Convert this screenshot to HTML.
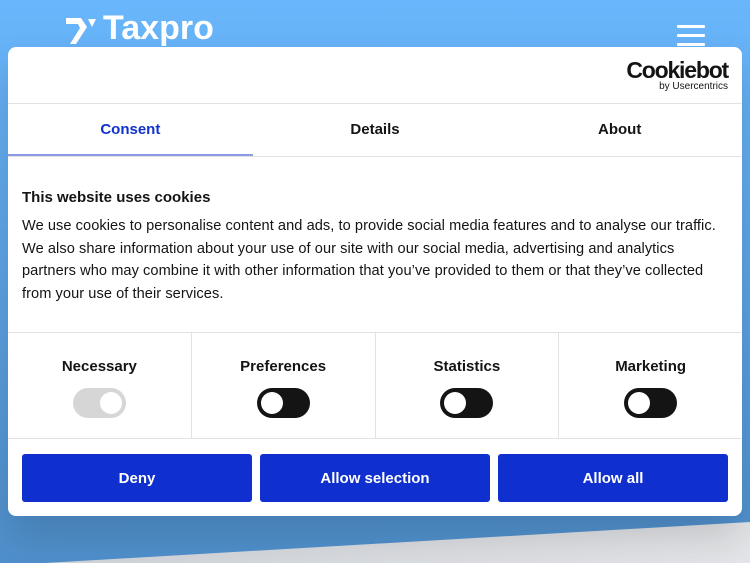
<!DOCTYPE html>
<html><head><meta charset="utf-8"><style>
*{margin:0;padding:0;box-sizing:border-box}
body{width:750px;height:563px;overflow:hidden;position:relative;font-family:"Liberation Sans",Arial,sans-serif;background:linear-gradient(180deg,#69b6fc 0%,#5da3e4 50%,#4f8fcb 100%)}
.wedge{position:absolute;left:0;top:0;width:750px;height:563px}
.mark{position:absolute;left:66px;top:18px}
.logo{position:absolute;left:103px;top:11px;color:#fff;font-weight:bold;font-size:34px;line-height:34px;white-space:nowrap}
.burger{position:absolute;left:677px;top:25px;width:28px}
.burger div{height:3px;background:#fff;margin-bottom:6px;border-radius:1px}
.dlg{position:absolute;left:8px;top:47px;width:734px;height:469px;background:#fff;border-radius:8px;box-shadow:0 20px 40px rgba(0,0,0,.15);overflow:hidden}
.cb{position:absolute;right:14px;top:11px;text-align:right;color:#141414}
.cb b{font-size:23px;letter-spacing:-1.2px;display:block;line-height:24px}
.cb span{font-size:10px;display:block;margin-top:-1px}
.tabs{position:absolute;top:56px;left:0;width:734px;height:54px;border-top:1px solid #e2e2e6;border-bottom:1px solid #e2e2e6;display:flex}
.tabs div{flex:1;text-align:center;font-weight:bold;font-size:15px;line-height:52px;color:#141414}
.tabs .a{color:#1032cf;border-bottom:2px solid #8a9ce6}
h1{position:absolute;left:14px;top:142px;font-size:15px;color:#141414}
p{position:absolute;left:14px;top:168px;font-size:14.6px;line-height:22.6px;color:#141414;white-space:nowrap;letter-spacing:.06px}
.tg{position:absolute;top:285px;left:0;width:734px;height:107px;border-top:1px solid #e2e2e6;border-bottom:1px solid #e2e2e6;display:flex}
.tg>div{flex:1;text-align:center;border-right:1px solid #e2e2e6;padding-top:25px;font-weight:bold;font-size:15px;color:#141414}
.tg>div:last-child{border:none}
.sw{width:53px;height:30px;border-radius:15px;background:#141414;margin:13px auto 0;position:relative}
.sw:after{content:"";position:absolute;left:4px;top:4px;width:22px;height:22px;border-radius:50%;background:#fff}
.sw.d{background:#d6d6d6}.sw.d:after{left:27px}
.btns{position:absolute;top:407px;left:14px;display:flex;gap:8px}
.btns div{width:230px;height:48px;background:#0f2fcf;border-radius:3px;color:#fff;font-weight:bold;font-size:15px;text-align:center;line-height:50px}
</style></head><body>
<svg class="wedge" viewBox="0 0 750 563"><defs><linearGradient id="g" x1="0" x2="1"><stop offset="0" stop-color="#cfd3d9"/><stop offset="1" stop-color="#e4e5e8"/></linearGradient></defs><polygon points="45,563 750,522 750,563" fill="url(#g)"/></svg>
<svg class="mark" width="34" height="26" viewBox="0 0 34 26"><path d="M0 0h15l6 9-11 17H4l10-16-2-4H0z" fill="#fff"/><path d="M22 1h8l-4 8z" fill="#fff"/></svg>
<div class="logo">Taxpro</div>
<div class="burger"><div></div><div></div><div></div></div>
<div class="dlg">
<div class="cb"><b>Cookiebot</b><span>by Usercentrics</span></div>
<div class="tabs"><div class="a">Consent</div><div>Details</div><div>About</div></div>
<h1>This website uses cookies</h1>
<p>We use cookies to personalise content and ads, to provide social media features and to analyse our traffic.<br>We also share information about your use of our site with our social media, advertising and analytics<br>partners who may combine it with other information that you’ve provided to them or that they’ve collected<br>from your use of their services.</p>
<div class="tg"><div>Necessary<div class="sw d"></div></div><div>Preferences<div class="sw"></div></div><div>Statistics<div class="sw"></div></div><div>Marketing<div class="sw"></div></div></div>
<div class="btns"><div>Deny</div><div>Allow selection</div><div>Allow all</div></div>
</div>
</body></html>
